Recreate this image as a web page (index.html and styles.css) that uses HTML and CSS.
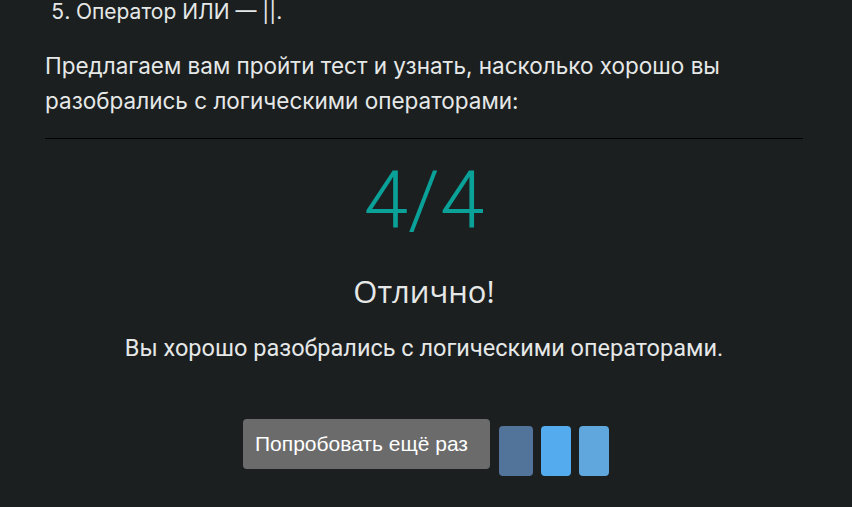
FILE: index.html
```html
<!DOCTYPE html>
<html lang="ru">
<head>
<meta charset="utf-8">
<link rel="stylesheet" href="styles.css">
</head>
<body>
<main class="article">
  <ol class="ops" start="5">
    <li>Оператор ИЛИ — ||.</li>
  </ol>
  <p class="lead">Предлагаем вам пройти тест и узнать, насколько хорошо вы разобрались с логическими операторами:</p>
  <section class="result">
    <div class="score">4/4</div>
    <h2 class="verdict">Отлично!</h2>
    <p class="summary">Вы хорошо разобрались с логическими операторами.</p>
    <div class="actions">
      <button class="retry">Попробовать ещё раз</button>
      <div class="share">
        <span class="share-btn vk"></span>
        <span class="share-btn tw"></span>
        <span class="share-btn fb"></span>
      </div>
    </div>
  </section>
</main>
</body>
</html>
```
FILE: styles.css
```css
html, body {
  margin: 0;
  background: #1b1f1f;
}
body {
  color: #e6e8e8;
  font-family: Inter, "Noto Sans", sans-serif;
  height: 507px;
  overflow: hidden;
}
.article {
  padding: 0 49px 0 45px;
}
.ops {
  margin: -4px 0 0;
  padding-left: 6px;
  list-style-position: inside;
  font-size: 21px;
  line-height: 32px;
}
.lead {
  margin: 20px 0 0;
  font-size: 22.5px;
  line-height: 35px;
  padding-bottom: 20px;
  border-bottom: 1px solid #000;
}
.result {
  text-align: center;
  padding-top: 13px;
}
.score {
  font-family: Roboto, sans-serif;
  font-weight: 300;
  font-size: 80px;
  line-height: 96px;
  color: #0aa199;
}
.verdict {
  margin: 23px 0 0;
  font-family: "Open Sans", sans-serif;
  font-weight: 400;
  font-size: 31px;
  line-height: 40px;
}
.summary {
  margin: 22px 0 0;
  font-family: Roboto, sans-serif;
  font-size: 23.5px;
  line-height: 30px;
}
.actions {
  margin-top: 56px;
  display: flex;
  justify-content: center;
  align-items: flex-start;
  gap: 9px;
  padding-left: 4px;
}
.retry {
  height: 50px;
  padding: 0 22px 0 12px;
  background: #6b6b6b;
  color: #fff;
  border: 0;
  border-radius: 4px;
  font-family: "Liberation Sans", Arial, sans-serif;
  font-size: 21px;
}
.share {
  display: flex;
  gap: 8px;
  margin-top: 7px;
}
.share-btn {
  display: block;
  width: 30px;
  height: 50px;
  border-radius: 4px;
}
.vk { background: #52739a; width: 34px; }
.tw { background: #54acee; }
.fb { background: #5fa7dc; }
```
